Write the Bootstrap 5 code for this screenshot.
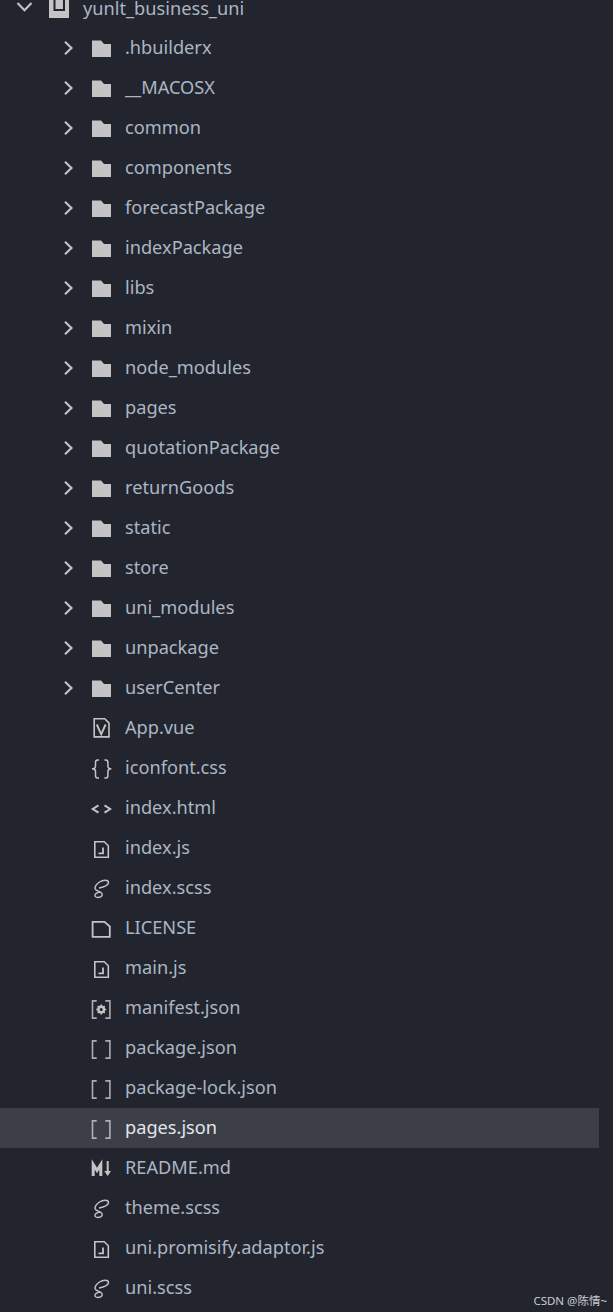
<!DOCTYPE html>
<html lang="en">
<head>
    <meta charset="UTF-8">
    <meta name="viewport" content="width=device-width, initial-scale=1.0">
    <title>Explorer</title>
    <link rel="stylesheet" href="https://cdn.jsdelivr.net/npm/bootstrap@5.3.0/dist/css/bootstrap.min.css">
    <style>
        html, body {
            height: 100%;
            overflow: hidden;
        }
        body {
            background: #22252d;
            font-family: "Noto Sans", "Noto Sans CJK SC", sans-serif;
            position: relative;
        }
        .tree-list {
            margin: -12px 14px 0 0;
            padding: 0;
            list-style: none;
        }
        .tree-row {
            height: 40px;
            padding-left: 60px;
            color: #abb6c5;
            font-size: 18.2px;
            white-space: nowrap;
        }
        .tree-row.root-row {
            padding-left: 15px;
        }
        .tree-row.is-active {
            background: #3c3f48;
            color: #e2e6ec;
        }
        .tree-label {
            margin-top: -1px;
        }
        .root-row .tree-label {
            line-height: 16px;
            margin-top: 0;
        }
        .tree-caret {
            width: 18px;
            height: 18px;
            flex: none;
        }
        .root-row .tree-caret {
            width: 22px;
            height: 22px;
        }
        .tree-icon {
            width: 22px;
            height: 22px;
            flex: none;
            margin: 0 13px 0 12px;
            color: #c4c4c4;
        }
        .root-row .tree-icon {
            margin: 0 12px 0 10px;
            width: 24px;
            height: 24px;
        }
        .watermark {
            position: absolute;
            right: 6px;
            bottom: 3px;
            font-size: 11.5px;
            color: #c9ccd1;
        }
    </style>
</head>
<body>
    <svg width="0" height="0" class="d-block">
        <defs>
            <symbol id="i-caret" viewBox="0 0 18 18"><path d="M5 2.800L11.500 9 5 15.200" fill="none" stroke="#c4c4c4" stroke-width="2.100"/></symbol>
            <symbol id="i-caret-down" viewBox="0 0 22 22"><path d="M2.500 6l7 7.200 7-7.200" fill="none" stroke="#c4c4c4" stroke-width="2.100"/></symbol>
            <symbol id="i-root" viewBox="0 0 24 24"><path fill="#c4c4c4" d="M2 2h20v20H2z"/><path d="M7.500 2v12h9.500V2" fill="none" stroke="#22252d" stroke-width="2"/></symbol>
            <symbol id="i-folder" viewBox="0 0 22 22"><path fill="currentColor" d="M2 3.500h9l3 3.500h7v13H2z"/></symbol>
            <symbol id="i-vue" viewBox="0 0 22 22"><path d="M4.200 1.800h10.500l4.300 4.300v13.800H4.200z" fill="none" stroke="currentColor" stroke-width="1.600"/><path d="M6.800 7.500l4.400 9.800 4.400-9.800" fill="none" stroke="currentColor" stroke-width="1.900"/></symbol>
            <symbol id="i-css" viewBox="0 0 22 22"><path d="M9 3H7.500C6 3 5.500 4 5.500 5.500V9C5.500 10.800 4 11.800 2 11.800c2 0 3.500 1 3.500 2.700v4c0 1.500.5 2.500 2 2.500H9M14.400 3h1.500c1.500 0 2 1 2 2.500V9c0 1.800 1.500 2.800 3.500 2.800-2 0-3.500 1-3.500 2.700v4c0 1.500-.5 2.500-2 2.500h-1.500" fill="none" stroke="currentColor" stroke-width="1.500"/></symbol>
            <symbol id="i-html" viewBox="0 0 22 22"><path d="M8.500 8.300L2.700 12l5.800 3.700M14.500 8.300l5.800 3.700-5.800 3.700" fill="none" stroke="currentColor" stroke-width="2"/></symbol>
            <symbol id="i-js" viewBox="0 0 22 22"><path d="M4.800 4.800h9.500l4 4v11.400H4.800z" fill="none" stroke="currentColor" stroke-width="1.600"/><path d="M13 10.500v5.800H8.500" fill="none" stroke="currentColor" stroke-width="1.800"/></symbol>
            <symbol id="i-scss" viewBox="0 0 22 22"><path d="M9 11C13 10.500 18.500 8.500 18.500 5.500 18.500 2.500 13 2.800 9.500 5 6 7.200 4 10.500 5.500 12.500c1.500 2 5.500 2 6.500 4 1 2-1 4-4 4-2.500 0-4-2-2.500-3.500 1.500-1.500 3.500-1.500 5-2.500" fill="none" stroke="currentColor" stroke-width="1.400"/></symbol>
            <symbol id="i-license" viewBox="0 0 22 22"><path d="M2.600 4.900h11.900l5.300 4.600v10.300H2.600z" fill="none" stroke="currentColor" stroke-width="1.800"/></symbol>
            <symbol id="i-manifest" viewBox="0 0 22 22"><path d="M6.700 3.900H2.500v17.200h4.200M15.300 3.900h4.600v17.200h-4.600" fill="none" stroke="currentColor" stroke-width="1.600" opacity=".85"/><circle cx="11.200" cy="12.500" r="2.800" fill="none" stroke="currentColor" stroke-width="2.400"/><path d="M11.200 7.500v2M11.200 15.500v2M6.200 12.500h2M14.200 12.500h2M7.700 9l1.400 1.400M13.300 14.600l1.400 1.400M14.700 9l-1.400 1.400M9.100 14.600L7.700 16" stroke="currentColor" stroke-width="1.500"/></symbol>
            <symbol id="i-json" viewBox="0 0 22 22"><path d="M6.700 3.900H2.500v17.200h4.200M15.300 3.900h4.600v17.200h-4.600" fill="none" stroke="currentColor" stroke-width="1.600" opacity=".85"/></symbol>
            <symbol id="i-md" viewBox="0 0 22 22"><path d="M3.200 19V7.500l3.800 6 3.800-6V19" fill="none" stroke="currentColor" stroke-width="3"/><path d="M17.700 4v11" stroke="currentColor" stroke-width="2"/><path d="M14.300 14h6.700l-3.300 5z" fill="currentColor"/></symbol>
        </defs>
    </svg>

    <ul class="tree-list">
        <li class="tree-row root-row d-flex align-items-center"><svg class="tree-caret"><use href="#i-caret-down"/></svg><svg class="tree-icon"><use href="#i-root"/></svg><span class="tree-label">yunlt_business_uni</span></li>
        <li class="tree-row d-flex align-items-center"><svg class="tree-caret"><use href="#i-caret"/></svg><svg class="tree-icon"><use href="#i-folder"/></svg><span class="tree-label">.hbuilderx</span></li>
        <li class="tree-row d-flex align-items-center"><svg class="tree-caret"><use href="#i-caret"/></svg><svg class="tree-icon"><use href="#i-folder"/></svg><span class="tree-label">__MACOSX</span></li>
        <li class="tree-row d-flex align-items-center"><svg class="tree-caret"><use href="#i-caret"/></svg><svg class="tree-icon"><use href="#i-folder"/></svg><span class="tree-label">common</span></li>
        <li class="tree-row d-flex align-items-center"><svg class="tree-caret"><use href="#i-caret"/></svg><svg class="tree-icon"><use href="#i-folder"/></svg><span class="tree-label">components</span></li>
        <li class="tree-row d-flex align-items-center"><svg class="tree-caret"><use href="#i-caret"/></svg><svg class="tree-icon"><use href="#i-folder"/></svg><span class="tree-label">forecastPackage</span></li>
        <li class="tree-row d-flex align-items-center"><svg class="tree-caret"><use href="#i-caret"/></svg><svg class="tree-icon"><use href="#i-folder"/></svg><span class="tree-label">indexPackage</span></li>
        <li class="tree-row d-flex align-items-center"><svg class="tree-caret"><use href="#i-caret"/></svg><svg class="tree-icon"><use href="#i-folder"/></svg><span class="tree-label">libs</span></li>
        <li class="tree-row d-flex align-items-center"><svg class="tree-caret"><use href="#i-caret"/></svg><svg class="tree-icon"><use href="#i-folder"/></svg><span class="tree-label">mixin</span></li>
        <li class="tree-row d-flex align-items-center"><svg class="tree-caret"><use href="#i-caret"/></svg><svg class="tree-icon"><use href="#i-folder"/></svg><span class="tree-label">node_modules</span></li>
        <li class="tree-row d-flex align-items-center"><svg class="tree-caret"><use href="#i-caret"/></svg><svg class="tree-icon"><use href="#i-folder"/></svg><span class="tree-label">pages</span></li>
        <li class="tree-row d-flex align-items-center"><svg class="tree-caret"><use href="#i-caret"/></svg><svg class="tree-icon"><use href="#i-folder"/></svg><span class="tree-label">quotationPackage</span></li>
        <li class="tree-row d-flex align-items-center"><svg class="tree-caret"><use href="#i-caret"/></svg><svg class="tree-icon"><use href="#i-folder"/></svg><span class="tree-label">returnGoods</span></li>
        <li class="tree-row d-flex align-items-center"><svg class="tree-caret"><use href="#i-caret"/></svg><svg class="tree-icon"><use href="#i-folder"/></svg><span class="tree-label">static</span></li>
        <li class="tree-row d-flex align-items-center"><svg class="tree-caret"><use href="#i-caret"/></svg><svg class="tree-icon"><use href="#i-folder"/></svg><span class="tree-label">store</span></li>
        <li class="tree-row d-flex align-items-center"><svg class="tree-caret"><use href="#i-caret"/></svg><svg class="tree-icon"><use href="#i-folder"/></svg><span class="tree-label">uni_modules</span></li>
        <li class="tree-row d-flex align-items-center"><svg class="tree-caret"><use href="#i-caret"/></svg><svg class="tree-icon"><use href="#i-folder"/></svg><span class="tree-label">unpackage</span></li>
        <li class="tree-row d-flex align-items-center"><svg class="tree-caret"><use href="#i-caret"/></svg><svg class="tree-icon"><use href="#i-folder"/></svg><span class="tree-label">userCenter</span></li>
        <li class="tree-row d-flex align-items-center"><span class="tree-caret"></span><svg class="tree-icon"><use href="#i-vue"/></svg><span class="tree-label">App.vue</span></li>
        <li class="tree-row d-flex align-items-center"><span class="tree-caret"></span><svg class="tree-icon"><use href="#i-css"/></svg><span class="tree-label">iconfont.css</span></li>
        <li class="tree-row d-flex align-items-center"><span class="tree-caret"></span><svg class="tree-icon"><use href="#i-html"/></svg><span class="tree-label">index.html</span></li>
        <li class="tree-row d-flex align-items-center"><span class="tree-caret"></span><svg class="tree-icon"><use href="#i-js"/></svg><span class="tree-label">index.js</span></li>
        <li class="tree-row d-flex align-items-center"><span class="tree-caret"></span><svg class="tree-icon"><use href="#i-scss"/></svg><span class="tree-label">index.scss</span></li>
        <li class="tree-row d-flex align-items-center"><span class="tree-caret"></span><svg class="tree-icon"><use href="#i-license"/></svg><span class="tree-label">LICENSE</span></li>
        <li class="tree-row d-flex align-items-center"><span class="tree-caret"></span><svg class="tree-icon"><use href="#i-js"/></svg><span class="tree-label">main.js</span></li>
        <li class="tree-row d-flex align-items-center"><span class="tree-caret"></span><svg class="tree-icon"><use href="#i-manifest"/></svg><span class="tree-label">manifest.json</span></li>
        <li class="tree-row d-flex align-items-center"><span class="tree-caret"></span><svg class="tree-icon"><use href="#i-json"/></svg><span class="tree-label">package.json</span></li>
        <li class="tree-row d-flex align-items-center"><span class="tree-caret"></span><svg class="tree-icon"><use href="#i-json"/></svg><span class="tree-label">package-lock.json</span></li>
        <li class="tree-row is-active d-flex align-items-center"><span class="tree-caret"></span><svg class="tree-icon"><use href="#i-json"/></svg><span class="tree-label">pages.json</span></li>
        <li class="tree-row d-flex align-items-center"><span class="tree-caret"></span><svg class="tree-icon"><use href="#i-md"/></svg><span class="tree-label">README.md</span></li>
        <li class="tree-row d-flex align-items-center"><span class="tree-caret"></span><svg class="tree-icon"><use href="#i-scss"/></svg><span class="tree-label">theme.scss</span></li>
        <li class="tree-row d-flex align-items-center"><span class="tree-caret"></span><svg class="tree-icon"><use href="#i-js"/></svg><span class="tree-label">uni.promisify.adaptor.js</span></li>
        <li class="tree-row d-flex align-items-center"><span class="tree-caret"></span><svg class="tree-icon"><use href="#i-scss"/></svg><span class="tree-label">uni.scss</span></li>
    </ul>

    <div class="watermark">CSDN @陈情~</div>

    <script src="https://cdn.jsdelivr.net/npm/bootstrap@5.3.0/dist/js/bootstrap.bundle.min.js"></script>
</body>
</html>
